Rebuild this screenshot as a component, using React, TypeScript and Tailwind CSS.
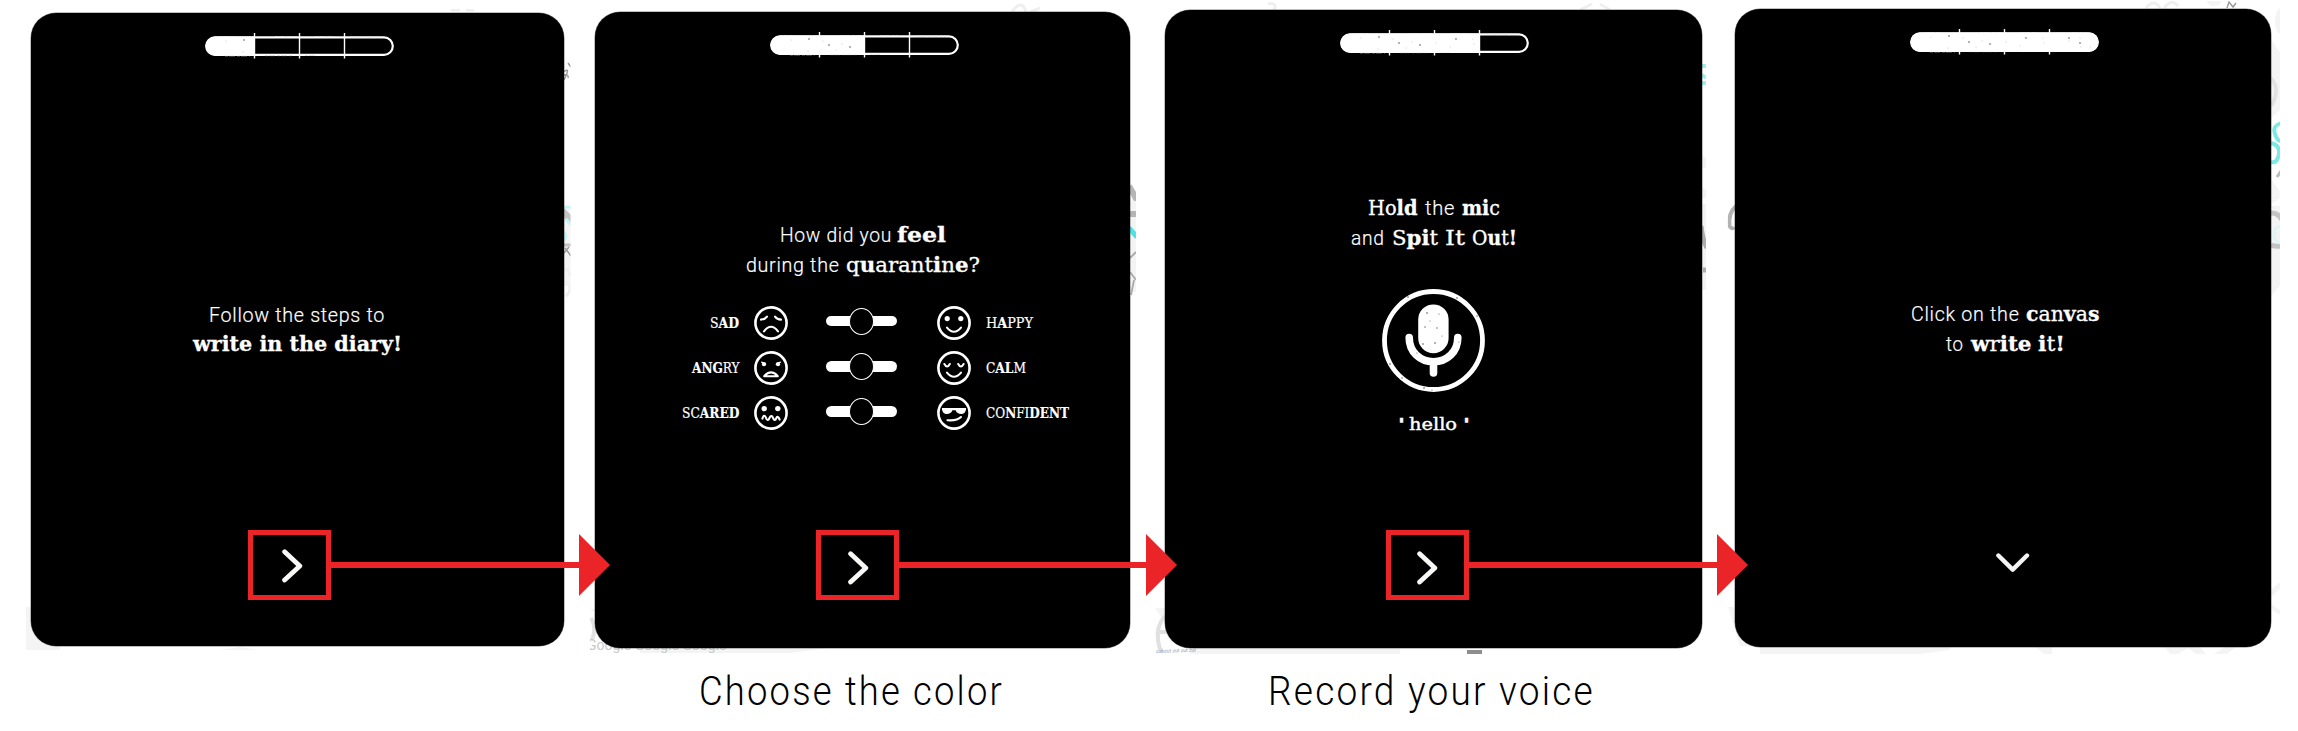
import { useLayoutEffect, useRef, useState, type ReactNode } from "react";

/** Text stretched horizontally so that it fills exactly `width` pixels. */
function Fit({ width, className = "", children }: { width: number; className?: string; children: ReactNode }) {
  const ref = useRef<HTMLSpanElement>(null);
  const [scale, setScale] = useState(1);
  useLayoutEffect(() => {
    const el = ref.current;
    if (!el) return;
    el.style.transform = "none";
    const natural = el.getBoundingClientRect().width;
    el.style.transform = `scaleX(${width / natural})`;
    setScale(width / natural);
  }, [width]);
  return (
    <span className="inline-block shrink-0 whitespace-pre" style={{ width }}>
      <span ref={ref} className={`inline-block origin-left ${className}`} style={{ transform: `scaleX(${scale})` }}>
        {children}
      </span>
    </span>
  );
}

const sans = "font-['Roboto',sans-serif] font-light text-[21px] tracking-[0.035em] [-webkit-text-stroke:0.2px_white]";
const slab = "font-['DejaVu_Serif',serif] text-[20px] [-webkit-text-stroke:0.3px_white]";
const label = "font-['DejaVu_Serif',serif] text-[14px] [-webkit-text-stroke:0.2px_white]";
const hello = "font-['DejaVu_Serif',serif] text-[16.5px] [-webkit-text-stroke:0.4px_white]";
const caption = "font-['Roboto',sans-serif] text-[41.5px] font-light tracking-[0.06em]";

function Progress({ filled, className }: { filled: number; className: string }) {
  const ticks = [49.5, 94.5, 139.5];
  const end = [49.5, 94.5, 139.5, 188][filled - 1];
  const specks = [
    [21, 8], [39, 7], [38, 19], [53, 9], [59, 13], [66, 18], [72, 12], [80, 15], [96, 13], [110, 17],
    [116, 9], [134, 14], [133, 9], [159, 9], [159, 12], [170, 9], [170, 14], [171, 18], [180, 18],
  ];
  return (
    <svg className={`shrink-0 ${className}`} width="189" height="26" viewBox="0 0 189 26" fill="none">
      <rect x="1.2" y="4.4" width="186.6" height="17.4" rx="8.7" stroke="white" strokeWidth="2.2" />
      <path d="M14 3.7H30M70 3.6H92M110 3.7H128M146 4H176M20 22.8H45M60 22.6H88M100 22.4H112" stroke="#ddd" strokeWidth="0.9" strokeDasharray="3 1 6 2" />
      {filled === 4 ? (
        <rect x="0.5" y="3.6" width="188" height="19.2" rx="9.2" fill="white" />
      ) : (
        <path d={`M10 3.6H${end}V22.6H10A9.2 9.2 0 0 1 10 3.6Z`} fill="white" />
      )}
      {ticks.map((x) => (
        <path key={x} d={`M${x} 0V25.5`} stroke="white" strokeWidth="1.4" />
      ))}
      {specks
        .filter(([x]) => x < end - 2)
        .map(([x, y], i) => (
          <circle key={i} cx={x} cy={y} r={i % 3 === 1 ? 0.8 : 0.5} fill={i % 3 === 1 ? "#555" : "#bbb"} />
        ))}
    </svg>
  );
}

const faces: Record<string, ReactNode> = {
  sad: (
    <>
      <path d="M-10-3.4Q-6-3.6-4-6.4M10-3.4Q6-3.6 4-6.4" />
      <path d="M-7 8.4Q0-.8 7 8.4" />
    </>
  ),
  angry: (
    <>
      <path d="M-9.4-5.8-5.4-3.9M9.4-5.8 5.4-3.9" strokeWidth="1.3" />
      <circle cx="-7" cy="-3.8" r="2.1" fill="white" stroke="none" />
      <circle cx="7" cy="-3.8" r="2.1" fill="white" stroke="none" />
      <path d="M-6.8 8.2Q0 .6 6.8 8.2Z" />
    </>
  ),
  scared: (
    <>
      <circle cx="-6.8" cy="-4.4" r="2.7" fill="white" stroke="none" />
      <circle cx="6.8" cy="-4.4" r="2.7" fill="white" stroke="none" />
      <path d="M-8.6 5.6C-7.6 2-6 2-5 4.8S-2.6 7.8-1.6 5.2S1 2.2 2 4.8S4.4 7.8 5.2 5.4S7.6 3.4 8.6 6.6" />
    </>
  ),
  happy: (
    <>
      <circle cx="-6.8" cy="-4.4" r="2.6" fill="white" stroke="none" />
      <circle cx="6.8" cy="-4.4" r="2.6" fill="white" stroke="none" />
      <path d="M-7 4.6Q0 13 7 4.6" />
    </>
  ),
  calm: (
    <>
      <path d="M-9.6-4Q-6.9 1-4.2-4M4.2-4Q6.9 1 9.6-4" />
      <path d="M-7 4.6Q0 13 7 4.6" />
    </>
  ),
  confident: (
    <>
      <path d="M-12-5H12V-3.2Q11 1 7.3 1Q3 1 1.6-2.8H-1.6Q-3 1-7.3 1Q-11 1-12-3.2Z" fill="white" stroke="none" />
      <path d="M-6.6 7.2Q3 8 7 4" />
    </>
  ),
};

function Face({ kind, className }: { kind: string; className: string }) {
  return (
    <svg className={`shrink-0 ${className}`} width="34" height="34" viewBox="-17 -17 34 34" fill="none" stroke="white" strokeWidth="2.1" strokeLinecap="round" strokeLinejoin="round">
      <circle r="15.6" strokeWidth="2.6" />
      {faces[kind]}
    </svg>
  );
}

function Slider() {
  return (
    <div className="mb-[3px] ml-[38px] flex h-[10.5px] w-[71px] items-center justify-center rounded-full bg-white">
      <div className="h-[27px] w-[25px] rounded-[50%] border-[1.5px] border-white bg-black" />
    </div>
  );
}

type Side = { kind: string; width: number; text: ReactNode };

function FeelingRow({ left, right }: { left: Side; right: Side }) {
  return (
    <div className="flex h-[45.2px] items-center">
      <div className="flex w-[144px] justify-end leading-5">
        <Fit width={left.width} className={label}>{left.text}</Fit>
      </div>
      <Face kind={left.kind} className="ml-[15px]" />
      <Slider />
      <Face kind={right.kind} className="ml-[40px]" />
      <div className="ml-[14.5px] leading-5">
        <Fit width={right.width} className={label}>{right.text}</Fit>
      </div>
    </div>
  );
}

/** Highlighted "next" chevron with the arrow that leads to the following screen. */
function NextButton({ className, chevron }: { className: string; chevron: string }) {
  return (
    <div className={`relative z-10 h-[70px] w-[83px] shrink-0 border-[5px] border-[#ea2427] ${className}`}>
      <svg className={chevron} width="21" height="34" viewBox="0 0 21 34" fill="none">
        <path d="M2.6 2.8 17.8 17 2.6 31" stroke="#f8f8f6" strokeWidth="4.8" strokeLinecap="round" strokeLinejoin="round" />
      </svg>
      <div className="absolute left-[77px] top-[-1px] flex h-[62px] w-[279.5px] items-center">
        <div className="h-[5.5px] flex-1 bg-[#ea2427]" />
        <svg className="shrink-0" width="31" height="62" viewBox="0 0 31 62">
          <path d="M0 0 31 31 0 62Z" fill="#ea2427" />
        </svg>
      </div>
    </div>
  );
}

/** Fragments of the word canvas that show around the dark screens. */
function CanvasScraps() {
  return (
    <svg className="pointer-events-none absolute inset-0" width="2298" height="731" viewBox="0 0 2298 731" aria-hidden="true">
      <clipPath id="sheets">
        <path d="M26 9H570.5V650H26ZM590 3H1136V653H590ZM1155 2H1706V654H1155ZM1727.8 1H2280V654H1727.8Z" />
      </clipPath>
      <g clipPath="url(#sheets)">
        <g fill="#f4f4f4">
          <path d="M26 607H60V650H258L240 647 220 650H26Z" />
          <path d="M590 609H640V653H790L828 648V646H640Z" />
          <path d="M1155 608H1190V654H1400V646H1180Z" />
          <path d="M1728 607H1760V654H1920L1950 650V646H1740Z" />
          <path d="M2036 647H2052V654H2044ZM2165 647H2200L2206 654H2196L2188 648 2178 654H2170ZM2214 654 2226 646H2238L2226 654Z" />
          <path d="M563 206H571V286H563ZM1130 190H1136V292H1130ZM1701 155 1706 158V168H1701ZM1701 186 1706 190V198H1701ZM1701 204H1706V290H1701Z" />
          <ellipse cx="2281" cy="21" rx="6" ry="13" />
          <ellipse cx="2214" cy="2" rx="7" ry="4" />
          <path d="M2271 40 2280 52V110L2271 118ZM2271 178 2280 192V198L2271 204ZM2271 206H2280V286L2271 296Z" />
          <path d="M2271 590 2280 582V588L2271 598ZM2271 604 2280 610V615L2271 609Z" />
        </g>
        <g fill="none">
          <path d="M563 72Q569 68 567 73T564 80M564 75Q569 74 568 78M564 253 569 247M565 248 571 256M568 63 571 67" stroke="#999" strokeWidth="1.4" />
          <path d="M562 211 572 221" stroke="#c4c4c4" strokeWidth="7" />
          <path d="M564 207H571M564 232Q568 236 564 240M566 219 571 225" stroke="#c3f5f4" strokeWidth="3" />
          <path d="M564 245H571" stroke="#c4c4c4" strokeWidth="3" />
          <path d="M564 270Q569 268 570 276M566 296Q571 292 570 285" stroke="#efefef" strokeWidth="3" />
          <path d="M1129 186 1137 200M1129 214H1137" stroke="#b5b5b5" strokeWidth="6" />
          <path d="M1129 228 1137 237" stroke="#4fe3e3" strokeWidth="5" />
          <path d="M1130 258 1136 252M1130 272 1136 280M1131 295 1134 280" stroke="#aaa" strokeWidth="1.8" />
          <path d="M1702 66H1706M1702 75 1706 78M1702 83H1706" stroke="#9cf1ef" strokeWidth="4" />
          <path d="M1701 226Q1702 238 1707 248M1703 270H1706" stroke="#adadad" strokeWidth="5" />
          <path d="M1736 206Q1728 213 1729.5 226Q1732 230 1734 227" stroke="#b3b3b3" strokeWidth="4" />
          <path d="M2282 123Q2272 125 2275 134T2282 140M2271 143Q2280 145 2279 154Q2277 164 2271 162" stroke="#7de9e7" strokeWidth="4" />
          <path d="M2270 213Q2278 212 2282 220M2271 245Q2276 247 2282 246" stroke="#c4c4c4" strokeWidth="5" />
          <path d="M2282 226Q2272 226 2275 240L2280 243" stroke="#dcf5f5" strokeWidth="3" />
          <path d="M2277 177 2281 171" stroke="#bbb" strokeWidth="3" />
          <path d="M2271 78Q2281 90 2271 106" stroke="#e2e2e2" strokeWidth="4" />
          <path d="M2227 8 2229 2 2233 7 2236 3" stroke="#999" strokeWidth="1.4" />
          <path d="M2146 8Q2154-2 2160 8M2164 8Q2172-2 2178 6M1580 10 1592 4M1600 4 1610 10M1012 12Q1022-2 1026 12M1030 12 1040 8M451 10H460M466 10H474M1268 4Q1278 2 1274 10" stroke="#efefef" strokeWidth="3" />
          <path d="M1165 616Q1156 626 1158 640T1164 650M1156 632H1166" stroke="#e0e0e0" strokeWidth="4" />
          <path d="M591 618Q597 628 592 640" stroke="#e2e2e2" strokeWidth="4" />
        </g>
        <rect x="1467" y="650" width="15" height="4" fill="#8d8d8d" />
        <g className="font-['Roboto',sans-serif]">
          <text x="587" y="650" fontSize="14" fill="#c6caca">Google Google Google</text>
          <text x="1156" y="653" fontSize="5" fill="#8d9cba" transform="rotate(-2 1156 653)">cut cut cut cut cut</text>
        </g>
      </g>
    </svg>
  );
}

const card = "flex shrink-0 flex-col items-start rounded-[25px] bg-black text-white ring-[0.5px] ring-black/50";
const line = "flex h-[30px] shrink-0 items-baseline leading-[30px]";

export default function App() {
  return (
    <main className="relative isolate h-[731px] w-[2298px] overflow-hidden bg-white">
      <CanvasScraps />
      <div className="relative flex h-[656px] items-start pl-[31px]">
        <section className={`${card} mt-[13px] h-[633px] w-[532.5px]`}>
          <Progress filled={1} className="ml-[174px] mt-[20px]" />
          <div className={`${line} ml-[178px] mt-[241px]`}>
            <Fit width={176} className={sans}>Follow the steps to</Fit>
          </div>
          <div className={`${line} ml-[162px] -mt-px`}>
            <Fit width={209} className={`${slab} font-bold`}>write in the diary!</Fit>
          </div>
          <NextButton className="ml-[217px] mt-[171px]" chevron="ml-[28.5px] mt-[14px]" />
        </section>

        <section className={`${card} ml-[31.5px] mt-[12px] h-[636px] w-[535px]`}>
          <Progress filled={2} className="ml-[174.5px] mt-[20px]" />
          <div className={`${line} ml-[184.5px] mt-[162px] gap-[5px]`}>
            <Fit width={112} className={sans}>How did you</Fit>
            <Fit width={49} className={`${slab} font-bold`}>feel</Fit>
          </div>
          <div className={`${line} ml-[151px] gap-[6px]`}>
            <Fit width={93.5} className={sans}>during the</Fit>
            <Fit width={134} className={slab}>q<b>u</b>arant<b>i</b>n<b>e</b>?</Fit>
          </div>
          <div className="mt-[20px] flex flex-col">
            <FeelingRow
              left={{ kind: "sad", width: 29, text: <>S<b>AD</b></> }}
              right={{ kind: "happy", width: 47, text: <>H<b>A</b>PPY</> }}
            />
            <FeelingRow
              left={{ kind: "angry", width: 47.5, text: <><b>ANG</b>RY</> }}
              right={{ kind: "calm", width: 40, text: <>C<b>AL</b>M</> }}
            />
            <FeelingRow
              left={{ kind: "scared", width: 57.5, text: <>SC<b>ARED</b></> }}
              right={{ kind: "confident", width: 83, text: <>CO<b>N</b>FI<b>DENT</b></> }}
            />
          </div>
          <NextButton className="ml-[220.5px] mt-[94.4px]" chevron="ml-[27px] mt-[16px]" />
        </section>

        <section className={`${card} ml-[34.5px] mt-[10px] h-[638px] w-[537px]`}>
          <Progress filled={3} className="ml-[175px] mt-[20px]" />
          <div className={`${line} ml-[203px] mt-[136.7px] gap-[7.5px]`}>
            <Fit width={49.5} className={slab}>Ho<b>ld</b></Fit>
            <Fit width={30} className={sans}>the</Fit>
            <Fit width={38} className={slab}><b>mi</b>c</Fit>
          </div>
          <div className={`${line} ml-[186.5px] gap-[7px]`}>
            <Fit width={33.5} className={sans}>and</Fit>
            <Fit width={46} className={slab}>S<b>pi</b>t</Fit>
            <Fit width={20} className={slab}>It</Fit>
            <Fit width={45} className={slab}>O<b>u</b>t<b>!</b></Fit>
          </div>
          <svg className="ml-[217px] mt-[36px] shrink-0" width="103" height="103" viewBox="0 0 103 103" fill="none" stroke="white">
            <circle cx="51.5" cy="51.5" r="49" strokeWidth="4.8" />
            <rect x="36.2" y="15.4" width="30.4" height="48.8" rx="15.2" fill="white" stroke="none" />
            <path d="M27.2 48.5C27.2 63 38 72.8 51.5 72.8S75.8 63 75.8 48.5M51.5 73V84" strokeWidth="7.6" strokeLinecap="round" />
            <g fill="#555" stroke="none">
              <circle cx="45" cy="24" r=".8" /><circle cx="57" cy="25" r=".6" /><circle cx="43" cy="38" r=".7" />
              <circle cx="55" cy="39" r=".7" /><circle cx="41" cy="55" r=".8" /><circle cx="53" cy="54" r=".8" />
              <circle cx="60" cy="47" r=".5" /><circle cx="48" cy="32" r=".5" /><circle cx="26" cy="8" r=".8" />
              <circle cx="75" cy="9" r=".8" /><circle cx="95" cy="27" r=".7" /><circle cx="8" cy="75" r=".8" />
              <circle cx="42" cy="99" r=".8" /><circle cx="50" cy="101" r=".6" /><circle cx="20" cy="89" r=".7" />
              <circle cx="77" cy="53" r=".6" /><circle cx="35" cy="64" r=".6" />
            </g>
          </svg>
          <div className="ml-[233px] mt-[22.5px] flex h-5 shrink-0 items-baseline gap-[4px] leading-5">
            <Fit width={7} className={`${hello} font-bold`}>'</Fit>
            <Fit width={48} className={hello}>hello</Fit>
            <Fit width={7} className={`${hello} ml-[2px] font-bold`}>'</Fit>
          </div>
          <NextButton className="ml-[221.5px] mt-[95.8px]" chevron="ml-[25.5px] mt-[16px]" />
        </section>

        <section className={`${card} ml-[33px] mt-[9px] h-[638px] w-[536.5px]`}>
          <Progress filled={4} className="ml-[175px] mt-[20px]" />
          <div className={`${line} ml-[176.5px] mt-[243.7px] gap-[6px]`}>
            <Fit width={108.5} className={sans}>Click on the</Fit>
            <Fit width={73.5} className={slab}><b>c</b>an<b>v</b>a<b>s</b></Fit>
          </div>
          <div className={`${line} ml-[211.5px] mt-[0.6px] gap-[7px]`}>
            <Fit width={17.5} className={sans}>to</Fit>
            <Fit width={60.5} className={slab}><b>w</b>r<b>ite</b></Fit>
            <Fit width={27} className={slab}><b>i</b>t<b>!</b></Fit>
          </div>
          <svg className="ml-[261px] mt-[194px] shrink-0" width="34" height="20" viewBox="0 0 34 20" fill="none">
            <path d="M2.4 2.5 16.7 16.6 31 2.5" stroke="#f5f5f3" strokeWidth="4.4" strokeLinecap="round" strokeLinejoin="round" />
          </svg>
        </section>
      </div>

      <div className="relative flex pl-[699px] pt-[10px] leading-[50px] text-black">
        <Fit width={305} className={caption}>Choose the color</Fit>
        <div className="w-[264px]" />
        <Fit width={327} className={caption}>Record your voice</Fit>
      </div>
    </main>
  );
}
